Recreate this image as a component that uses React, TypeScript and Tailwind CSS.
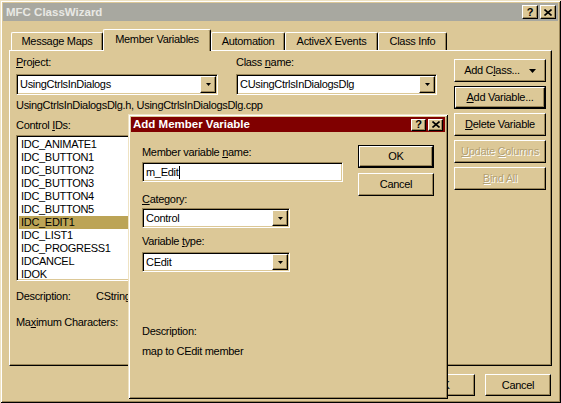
import React from 'react';

const raised =
  'border border-t-white border-l-white border-r-black border-b-black shadow-[inset_-1px_-1px_0_#9a8658]';
const sunken =
  'border border-t-[#9a8658] border-l-[#9a8658] border-r-white border-b-white shadow-[inset_1px_1px_0_#000,inset_-1px_-1px_0_#dcc897]';

const U = ({ children }: { children: React.ReactNode }) => <span className="underline underline-offset-[1px]">{children}</span>;

const SmallArrow = () => (
  <svg width="5" height="3" viewBox="0 0 5 3">
    <path d="M0 0h5L2.5 3z" fill="#000" />
  </svg>
);

const Combo = ({ text, className }: { text: string; className: string }) => (
  <div className={`${sunken} bg-white flex ${className}`}>
    <div className="flex-1 pl-[3px] flex items-center">{text}</div>
    <div className={`${raised} bg-[#dcc897] w-[16px] m-[1px] flex items-center justify-center`}>
      <SmallArrow />
    </div>
  </div>
);

type BtnProps = { children: React.ReactNode; className?: string; def?: boolean; disabled?: boolean };

const Btn = ({ children, className = '', def, disabled }: BtnProps) => {
  const label = (
    <span className={disabled ? 'text-[#b3a173] [text-shadow:1px_1px_0_#ffffff]' : ''}>{children}</span>
  );
  if (def) {
    return (
      <div className={`border border-black flex ${className}`}>
        <div className={`${raised} flex-1 flex items-center justify-center`}>{label}</div>
      </div>
    );
  }
  return <div className={`${raised} flex items-center justify-center ${className}`}>{label}</div>;
};

const CaptionButtons = ({ small }: { small?: boolean }) => (
  <div className="ml-auto flex gap-[2px]">
    <div className={`${raised} bg-[#dcc897] ${small ? 'w-[15px] h-[12px]' : 'w-[16px] h-[14px]'} flex items-center justify-center font-bold text-[11px] leading-none`}>
      ?
    </div>
    <div className={`${raised} bg-[#dcc897] ${small ? 'w-[15px] h-[12px]' : 'w-[16px] h-[14px]'} flex items-center justify-center`}>
      <svg width="8" height="7" viewBox="0 0 8 7">
        <path d="M0.5 0.5L7.5 6.5M7.5 0.5L0.5 6.5" stroke="#000" strokeWidth="1.6" />
      </svg>
    </div>
  </div>
);

const tabs = [
  { name: 'Message Maps', w: 'w-[92px]' },
  { name: 'Member Variables', w: 'w-[108px]', active: true },
  { name: 'Automation', w: 'w-[74px]' },
  { name: 'ActiveX Events', w: 'w-[93px]' },
  { name: 'Class Info', w: 'w-[69px]' },
];

const ids = [
  'IDC_ANIMATE1',
  'IDC_BUTTON1',
  'IDC_BUTTON2',
  'IDC_BUTTON3',
  'IDC_BUTTON4',
  'IDC_BUTTON5',
  'IDC_EDIT1',
  'IDC_LIST1',
  'IDC_PROGRESS1',
  'IDCANCEL',
  'IDOK',
];

export default function App() {
  return (
    <div className="relative w-[561px] h-[403px] overflow-hidden bg-[#dcc897] p-[3px] flex flex-col text-black text-[11px] leading-[13px] tracking-[-0.3px] font-['Liberation_Sans',Arial,sans-serif] shadow-[inset_1px_1px_0_#efe3c3,inset_-1px_-1px_0_#000,inset_2px_2px_0_#fff,inset_-2px_-2px_0_#9a8658]">
      {/* title bar */}
      <div className="h-[18px] bg-[#a8a8a0] flex items-center pl-[3px] pr-[2px]">
        <span className="font-bold text-[11.5px] tracking-normal text-[#e8e8e4]">MFC ClassWizard</span>
        <CaptionButtons />
      </div>

      <div className="px-[6px] pt-[8px] flex flex-col">
        {/* tabs */}
        <div className="h-[21px] flex items-end pl-[2px]">
          {tabs.map((t) =>
            t.active ? (
              <div
                key={t.name}
                className={`${t.w} h-[22px] -mb-[1px] relative z-10 bg-[#dcc897] border-t border-l border-white border-r border-r-black rounded-t-[2px] shadow-[inset_-1px_0_0_#9a8658] flex items-center justify-center pb-[2px]`}
              >
                {t.name}
              </div>
            ) : (
              <div
                key={t.name}
                className={`${t.w} h-[18px] border-t border-l border-white border-r border-r-black rounded-t-[2px] shadow-[inset_-1px_0_0_#9a8658] flex items-center justify-center`}
              >
                {t.name}
              </div>
            ),
          )}
        </div>

        {/* tab panel */}
        <div className={`${raised} h-[316px] flex`}>
          <div className="flex-1 pl-[6px] pt-[5px] flex flex-col">
            <div className="flex gap-[18px]">
              <div className="flex flex-col">
                <div>
                  <U>P</U>roject:
                </div>
                <Combo text="UsingCtrlsInDialogs" className="mt-[5px] w-[202px] h-[21px]" />
              </div>
              <div className="flex flex-col">
                <div>
                  Class <U>n</U>ame:
                </div>
                <Combo text="CUsingCtrlsInDialogsDlg" className="mt-[5px] w-[201px] h-[21px]" />
              </div>
            </div>
            <div className="mt-[4px]">UsingCtrlsInDialogsDlg.h, UsingCtrlsInDialogsDlg.cpp</div>
            <div className="mt-[7px]">
              Control <U>I</U>Ds:
            </div>
            <div className={`${sunken} bg-white mt-[3px] w-[200px] h-[146px] p-[2px] flex flex-col`}>
              {ids.map((id) => (
                <div key={id} className={`h-[13px] pl-[2px] ${id === 'IDC_EDIT1' ? 'bg-[#bca456]' : ''}`}>
                  {id}
                </div>
              ))}
            </div>
            <div className="mt-[9px] flex">
              <span className="w-[80px]">Description:</span>
              <span>CString</span>
            </div>
            <div className="mt-[13px]">
              Ma<U>x</U>imum Characters:
            </div>
          </div>

          <div className="w-[92px] mr-[5px] pt-[8px] flex flex-col gap-[4px]">
            <Btn className="h-[23px]">
              <span className="flex items-center gap-[9px]">
                <span>
                  Add C<U>l</U>ass...
                </span>
                <svg width="7" height="4" viewBox="0 0 7 4">
                  <path d="M0 0h7L3.5 4z" fill="#000" />
                </svg>
              </span>
            </Btn>
            <Btn className="h-[23px]" def>
              <U>A</U>dd Variable...
            </Btn>
            <Btn className="h-[23px]">
              <U>D</U>elete Variable
            </Btn>
            <Btn className="h-[23px]" disabled>
              <U>U</U>pdate <U>C</U>olumns
            </Btn>
            <Btn className="h-[23px]" disabled>
              <U>B</U>ind All
            </Btn>
          </div>
        </div>

        {/* bottom buttons */}
        <div className="mt-[8px] pr-[1px] flex justify-end gap-[10px]">
          <Btn className="w-[66px] h-[22px]">OK</Btn>
          <Btn className="w-[66px] h-[22px]">Cancel</Btn>
        </div>
      </div>

      {/* modal dialog */}
      <div className="absolute left-[128px] top-[114px] w-[320px] h-[285px] z-20 bg-[#dcc897] p-[3px] flex flex-col shadow-[inset_1px_1px_0_#efe3c3,inset_-1px_-1px_0_#000,inset_2px_2px_0_#fff,inset_-2px_-2px_0_#9a8658]">
        <div className="h-[15px] bg-[#800000] flex items-center pl-[2px] pr-[2px]">
          <span className="font-bold text-[11.5px] tracking-normal text-white">Add Member Variable</span>
          <CaptionButtons small />
        </div>
        <div className="flex-1 flex">
          <div className="flex-1 pl-[11px] pt-[14px] flex flex-col">
            <div>
              Member variable <U>n</U>ame:
            </div>
            <div className={`${sunken} bg-white mt-[3px] w-[201px] h-[20px] flex items-center pl-[3px]`}>
              m_Edit
              <span className="ml-[1px] w-px h-[13px] bg-black" />
            </div>
            <div className="mt-[11px]">
              <U>C</U>ategory:
            </div>
            <Combo text="Control" className="mt-[2px] w-[148px] h-[20px]" />
            <div className="mt-[7px]">
              Variable <U>t</U>ype:
            </div>
            <Combo text="CEdit" className="mt-[4px] w-[148px] h-[20px]" />
            <div className="mt-[53px]">Description:</div>
            <div className="mt-[7px]">map to CEdit member</div>
          </div>
          <div className="w-[76px] mr-[11px] pt-[13px] flex flex-col gap-[5px]">
            <Btn className="h-[23px]" def>
              OK
            </Btn>
            <Btn className="h-[23px]">Cancel</Btn>
          </div>
        </div>
      </div>
    </div>
  );
}
